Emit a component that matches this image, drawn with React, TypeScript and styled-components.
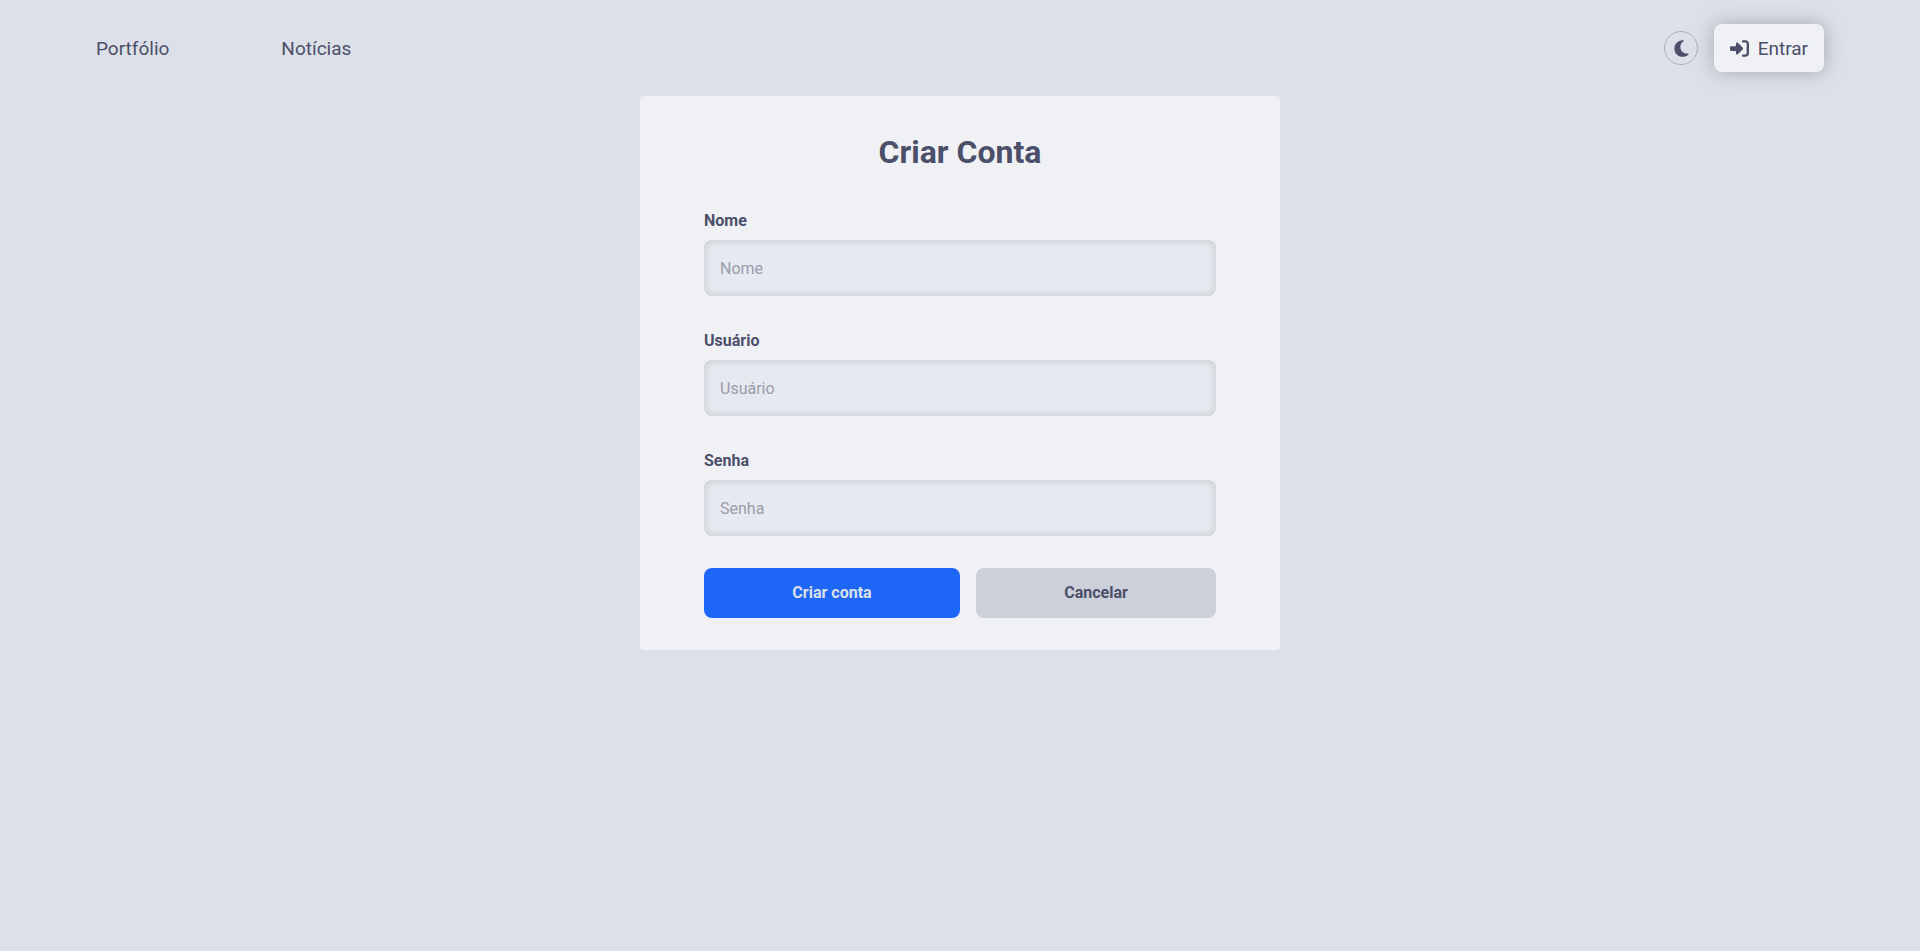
import React from "react";
import styled, { createGlobalStyle } from "styled-components";
import { FaMoon, FaRightToBracket } from "react-icons/fa6";

const GlobalStyle = createGlobalStyle`
  *, *::before, *::after { box-sizing: border-box; }
  body {
    margin: 0;
    min-height: 100vh;
    background: #dce0e8;
    color: #4c4f69;
    font-family: Roboto, "Liberation Sans", sans-serif;
    font-size: 16px;
    line-height: 24px;
  }
  button, input { font: inherit; color: inherit; }
`;

const Header = styled.header`
  display: flex;
  align-items: center;
  justify-content: space-between;
  padding: 24px 5%;
`;

const Nav = styled.nav`
  display: flex;
  gap: 112px;
`;

const NavLink = styled.a`
  color: inherit;
  font-size: 19px;
  line-height: 29px;
  text-decoration: none;
`;

const Actions = styled.div`
  display: flex;
  align-items: center;
  gap: 16px;
`;

const ThemeButton = styled.button`
  display: flex;
  align-items: center;
  justify-content: center;
  width: 34px;
  height: 34px;
  padding: 0;
  border: 1px solid #acb0be;
  border-radius: 50%;
  background: transparent;
  font-size: 19px;
  cursor: pointer;
`;

const LoginLink = styled(NavLink)`
  display: flex;
  align-items: center;
  justify-content: space-between;
  gap: 8px;
  min-width: 110px;
  height: 48px;
  padding: 0 16px;
  border-radius: 8px;
  background: #eff1f5;
  box-shadow: 0 0 20px rgba(0, 0, 0, 0.25);
`;

const Card = styled.form`
  display: flex;
  flex-direction: column;
  gap: 32px;
  width: calc(100% - 32px);
  max-width: 640px;
  margin: 0 auto;
  padding: 32px 64px;
  border-radius: 4px;
  background: #eff1f5;
`;

const Title = styled.h1`
  margin: 0;
  font-size: 32px;
  line-height: 48px;
  font-weight: 700;
  text-align: center;
`;

const Field = styled.div`
  display: flex;
  flex-direction: column;
  gap: 6px;
`;

const Label = styled.label`
  line-height: 26px;
  font-weight: 700;
`;

const Input = styled.input`
  width: 100%;
  height: 56px;
  padding: 0 16px;
  border: 0;
  border-radius: 8px;
  background: #e6e9ef;
  box-shadow: inset 0 0 10px rgba(0, 0, 0, 0.15);
  line-height: normal;

  &::placeholder {
    color: #9a9cad;
    opacity: 1;
  }
`;

const ButtonRow = styled.div`
  display: flex;
  gap: 16px;
`;

const Button = styled.button<{ $primary?: boolean }>`
  flex: ${({ $primary }) => ($primary ? "0 0 50%" : "1")};
  height: 50px;
  padding: 0 16px;
  border: 0;
  border-radius: 8px;
  background: ${({ $primary }) => ($primary ? "#1e66f5" : "#ccd0da")};
  color: ${({ $primary }) => ($primary ? "#dce0e8" : "#4c4f69")};
  font-weight: 700;
  cursor: pointer;
`;

const fields = [
  { id: "name", label: "Nome", type: "text" },
  { id: "username", label: "Usuário", type: "text" },
  { id: "password", label: "Senha", type: "password" },
];

export default function App() {
  return (
    <>
      <GlobalStyle />
      <Header>
        <Nav>
          <NavLink href="#portfolio">Portfólio</NavLink>
          <NavLink href="#noticias">Notícias</NavLink>
        </Nav>
        <Actions>
          <ThemeButton type="button" aria-label="Alternar tema">
            <FaMoon />
          </ThemeButton>
          <LoginLink href="#entrar">
            <FaRightToBracket />
            Entrar
          </LoginLink>
        </Actions>
      </Header>
      <main>
        <Card onSubmit={(event: React.FormEvent) => event.preventDefault()}>
          <Title>Criar Conta</Title>
          {fields.map(({ id, label, type }) => (
            <Field key={id}>
              <Label htmlFor={id}>{label}</Label>
              <Input id={id} name={id} type={type} placeholder={label} />
            </Field>
          ))}
          <ButtonRow>
            <Button type="submit" $primary>
              Criar conta
            </Button>
            <Button type="button">Cancelar</Button>
          </ButtonRow>
        </Card>
      </main>
    </>
  );
}
